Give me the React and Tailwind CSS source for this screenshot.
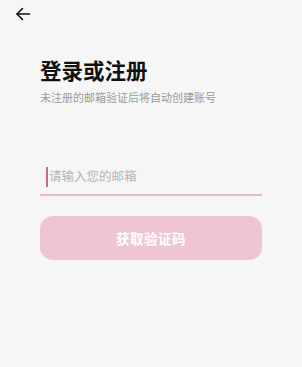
import { useState } from 'react'

export default function App() {
  const [email, setEmail] = useState('')

  return (
    <div
      className="w-[302px] h-[367px] bg-[#f6f6f6] overflow-hidden"
      style={{ fontFamily: '"Noto Sans CJK SC", "Noto Sans", sans-serif' }}
    >
      {/* Back arrow */}
      <div className="pl-[15px] pt-[6px] h-[22px]">
        <svg width="16" height="16" viewBox="0 0 16 16" fill="none" stroke="#111" strokeWidth="1.6" strokeLinecap="round" strokeLinejoin="round">
          <path d="M14.5 8H2" />
          <path d="M7.5 2.5L2 8l5.5 5.5" />
        </svg>
      </div>

      <div className="px-[40px] pt-[33px]">
        <h1 className="text-[21.5px] leading-[30px] font-bold text-[#111]">登录或注册</h1>
        <p className="mt-[4px] text-[11px] leading-[16px] text-[#9a9a9a]">未注册的邮箱验证后将自动创建账号</p>

        {/* Email input */}
        <div className="mt-[54px] flex items-center h-[37px] border-b-2 border-[#e8b8c9]">
          <span className="w-[2px] h-[20px] bg-[#c36b8d] ml-[6px]" />
          <input
            value={email}
            onChange={(e) => setEmail(e.target.value)}
            placeholder="请输入您的邮箱"
            className="flex-1 bg-transparent outline-none text-[12.5px] text-[#333] placeholder:text-[#b5b5b5] pl-[1px]"
          />
        </div>

        {/* Submit */}
        <button className="mt-[20px] w-full h-[44px] rounded-[13px] bg-[#f0c5d3] text-white text-[13.5px] font-bold tracking-[0.5px]">
          获取验证码
        </button>
      </div>
    </div>
  )
}
